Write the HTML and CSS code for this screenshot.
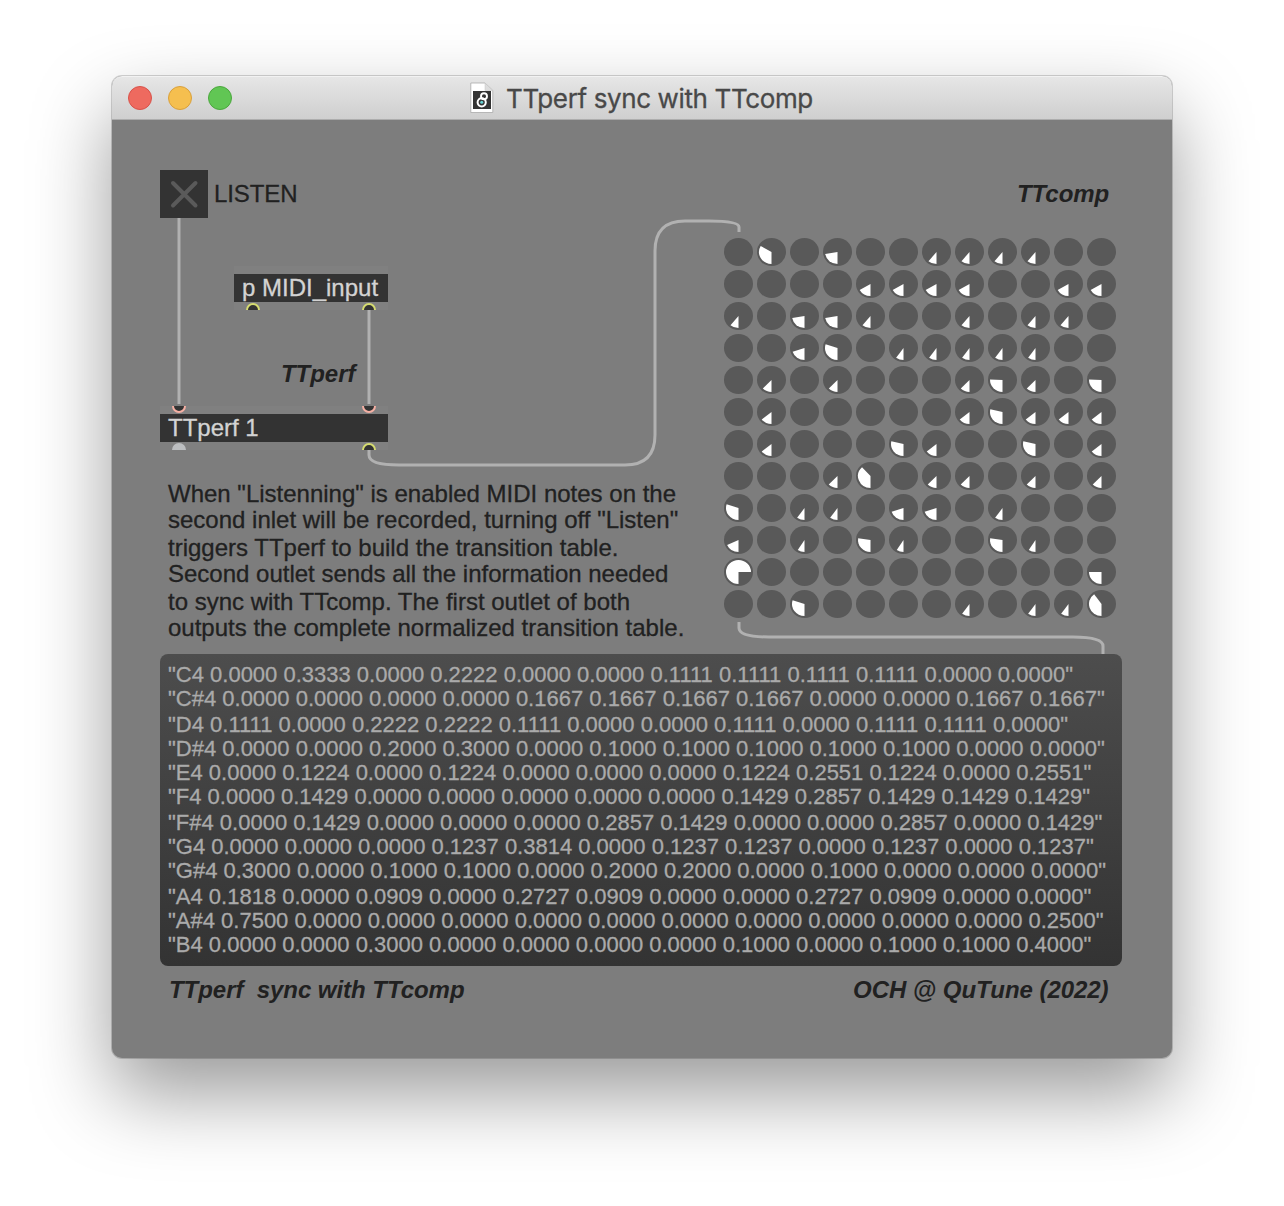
FILE: index.html
```html
<!DOCTYPE html>
<html lang="en">
<head>
<meta charset="utf-8">
<title>TTperf sync with TTcomp</title>
<link rel="stylesheet" href="styles.css">
</head>
<body>
<main class="window">
  <header class="titlebar">
    <div class="lights"><span class="light close"></span><span class="light minimise"></span><span class="light zoom"></span></div>
    <h1 class="title">
      <svg class="doc-icon" width="24" height="32" viewBox="0 0 24 32" aria-hidden="true">
        <path d="M.8 1H15l7.800 7.500V30.500H.8z" fill="#fff" stroke="#aaa" stroke-width=".8"/>
        <path d="M15 1v7.500h7.800z" fill="#ddd" stroke="#c4c4c4" stroke-width=".5"/>
        <path d="M3 9h18v18H3z" fill="#333"/>
        <circle cx="11.700" cy="20.300" r="4.100" fill="none" stroke="#fff" stroke-width="2"/>
        <circle cx="14" cy="14.200" r="3" fill="none" stroke="#fff" stroke-width="1.900"/>
        <circle cx="11.700" cy="20.300" r="1.500" fill="#67d3d5"/>
      </svg>
      <span class="title-text">TTperf sync with TTcomp</span>
    </h1>
  </header>
  <section class="patcher">
    <svg class="cables" width="1060" height="938" viewBox="112 120 1060 938" aria-hidden="true">
      <path d="M179 218V404"/>
      <path d="M369 310V404"/>
      <path d="M369 450V455Q369 465 399 465H625Q655 465 655 435V251Q655 221 685 221H709Q739 221 739 227V232"/>
      <path d="M739 622V628Q739 637 769 637H1073Q1103 637 1103 646V655"/>
    </svg>

    <div class="node listen">
      <svg class="toggle" width="48" height="48" viewBox="0 0 48 48" aria-hidden="true"><path d="M13 13 35.500 35.500M35.500 13 13 35.500"/></svg>
      <span class="label">LISTEN</span>
    </div>

    <div class="node object midi">
      <div class="ports"></div>
      <div class="box">p MIDI_input</div>
      <div class="ports"><i class="port out at-left"></i><i class="port out at-right"></i></div>
    </div>

    <div class="node object perf">
      <div class="ports"><i class="port in at-left"></i><i class="port in at-right"></i></div>
      <div class="box">TTperf 1</div>
      <div class="ports"><i class="port plain at-left"></i><i class="port out at-right"></i></div>
    </div>

    <span class="node heading h-perf">TTperf</span>
    <span class="node heading h-comp">TTcomp</span>

    <p class="node comment"><span class="line">When "Listenning" is enabled MIDI notes on the</span><span class="line">second inlet will be recorded, turning off "Listen"</span><span class="line">triggers TTperf to build the transition table.</span><span class="line">Second outlet sends all the information needed</span><span class="line">to sync with TTcomp. The first outlet of both</span><span class="line">outputs the complete normalized transition table.</span></p>

    <div class="node dials" id="dials"></div>
    <div class="node message" id="message"></div>

    <span class="node heading h-name">TTperf&nbsp; sync with TTcomp</span>
    <span class="node heading h-credit">OCH @ QuTune (2022)</span>
  </section>
</main>
<script src="app.js"></script>
</body>
</html>
```
FILE: styles.css
```css
* { box-sizing: border-box; }
body { margin: 0; width: 1284px; height: 1206px; padding: 76px 112px; background: #fff; overflow: hidden; font-family: "Liberation Sans", Arial, sans-serif; }
.window { width: 1060px; height: 982px; border-radius: 10px; background: #7d7d7d; box-shadow: 0 0 0 1px rgba(0,0,0,.17), 0 36px 80px rgba(0,0,0,.4); }
.titlebar { height: 44px; padding: 0 16px; display: flex; align-items: center; position: relative; border-radius: 10px 10px 0 0; background: linear-gradient(#e6e6e6, #cfcfcf); border-top: 1px solid #f2f2f2; border-bottom: 1px solid #adadad; }
.lights { display: flex; gap: 16px; }
.light { width: 24px; height: 24px; border-radius: 50%; border: 1px solid; }
.close { background: #ee6a5f; border-color: #d8524a; }
.minimise { background: #f5bf4f; border-color: #d9a03c; }
.zoom { background: #61c654; border-color: #4ba73d; }
.title { position: absolute; left: 358px; top: 5px; margin: 0; display: flex; align-items: center; gap: 12px; height: 32px; font: 400 26px/32px Inter, sans-serif; color: #494949; }
.doc-icon { flex: none; }
.title-text { white-space: nowrap; letter-spacing: -.38px; padding-top: 2px; -webkit-text-stroke: .3px; }
.patcher { position: relative; height: 938px; }
.cables { display: block; position: absolute; left: 0; top: 0; fill: none; stroke: #b1b1b1; stroke-width: 3; }
.node { position: absolute; white-space: nowrap; }
.listen { left: 48px; top: 50px; display: flex; align-items: center; gap: 6px; }
.toggle { background: #333; stroke: #5a5a5a; stroke-width: 4; stroke-linecap: round; }
.label { font-size: 24px; color: #212121; letter-spacing: -.1px; }
.label, .box, .comment, .message { -webkit-text-stroke: .3px; }
.object { background: #808080; }
.midi { left: 122px; top: 146px; width: 154px; }
.perf { left: 48px; top: 286px; width: 228px; }
.ports { position: relative; height: 8px; overflow: hidden; }
.box { height: 28px; padding-left: 8px; background: #333; color: #d3d3d3; font-size: 24px; line-height: 28px; }
.port { position: absolute; width: 14px; height: 14px; border-radius: 50%; background: #333; border: 2px solid #d6dc70; }
.out, .plain { top: 1px; }
.in { bottom: 1px; border-color: #f5b0a4; }
.plain { background: #bcbec0; border-color: #bcbec0; }
.at-left { left: 12px; }
.at-right { right: 12px; }
.heading { font-size: 24px; line-height: 28px; font-weight: 700; font-style: italic; color: #212121; letter-spacing: -.04px; }
.h-perf { left: 169px; top: 240px; }
.h-comp { left: 905px; top: 60px; }
.h-name { left: 57px; top: 856px; }
.h-credit { left: 741px; top: 856px; }
.comment { left: 56px; top: 360px; margin: 0; display: flex; flex-direction: column; align-items: flex-start; font-size: 24px; line-height: 27px; color: #212121; }
.line { height: 28px; }
.line:nth-child(odd) { height: 26px; }
.dials { left: 612px; top: 118px; display: grid; grid-template-columns: repeat(12, 29px); gap: 4px; }
.dial { display: block; }
.dial-face { fill: #595959; }
.dial-value { fill: #fff; }
.message { left: 48px; top: 534px; width: 962px; height: 312px; padding: 8px; border-radius: 8px; background: linear-gradient(#4d4d4d, #333); color: #aaa; font-size: 22px; line-height: 25px; }
.row { display: block; width: max-content; height: 24px; }
.row:nth-child(2), .row:nth-child(6), .row:nth-child(9) { height: 26px; }
```
FILE: app.js
```js
const table = `C4 0.0000 0.3333 0.0000 0.2222 0.0000 0.0000 0.1111 0.1111 0.1111 0.1111 0.0000 0.0000
C#4 0.0000 0.0000 0.0000 0.0000 0.1667 0.1667 0.1667 0.1667 0.0000 0.0000 0.1667 0.1667
D4 0.1111 0.0000 0.2222 0.2222 0.1111 0.0000 0.0000 0.1111 0.0000 0.1111 0.1111 0.0000
D#4 0.0000 0.0000 0.2000 0.3000 0.0000 0.1000 0.1000 0.1000 0.1000 0.1000 0.0000 0.0000
E4 0.0000 0.1224 0.0000 0.1224 0.0000 0.0000 0.0000 0.1224 0.2551 0.1224 0.0000 0.2551
F4 0.0000 0.1429 0.0000 0.0000 0.0000 0.0000 0.0000 0.1429 0.2857 0.1429 0.1429 0.1429
F#4 0.0000 0.1429 0.0000 0.0000 0.0000 0.2857 0.1429 0.0000 0.0000 0.2857 0.0000 0.1429
G4 0.0000 0.0000 0.0000 0.1237 0.3814 0.0000 0.1237 0.1237 0.0000 0.1237 0.0000 0.1237
G#4 0.3000 0.0000 0.1000 0.1000 0.0000 0.2000 0.2000 0.0000 0.1000 0.0000 0.0000 0.0000
A4 0.1818 0.0000 0.0909 0.0000 0.2727 0.0909 0.0000 0.0000 0.2727 0.0909 0.0000 0.0000
A#4 0.7500 0.0000 0.0000 0.0000 0.0000 0.0000 0.0000 0.0000 0.0000 0.0000 0.0000 0.2500
B4 0.0000 0.0000 0.3000 0.0000 0.0000 0.0000 0.0000 0.1000 0.0000 0.1000 0.1000 0.4000`.split("\n");

const wedge = (value) => {
  if (!value) return "";
  const a = value * 2 * Math.PI;
  const x = 14.5 - 12.5 * Math.sin(a);
  const y = 14 + 12 * Math.cos(a);
  return `<path class="dial-value" d="M14.5 14V26A12.5 12 0 ${value > 0.5 ? 1 : 0} 1 ${x.toFixed(2)} ${y.toFixed(2)}Z"/>`;
};

const dials = document.getElementById("dials");
const message = document.getElementById("message");
for (const line of table) {
  for (const value of line.split(" ").slice(1).map(Number)) {
    dials.insertAdjacentHTML("beforeend", `<svg class="dial" width="29" height="28" viewBox="0 0 29 28"><ellipse class="dial-face" cx="14.5" cy="14" rx="14.5" ry="14"/>${wedge(value)}</svg>`);
  }
  const row = document.createElement("span");
  row.className = "row";
  row.textContent = `"${line}"`;
  message.append(row);
}
```
